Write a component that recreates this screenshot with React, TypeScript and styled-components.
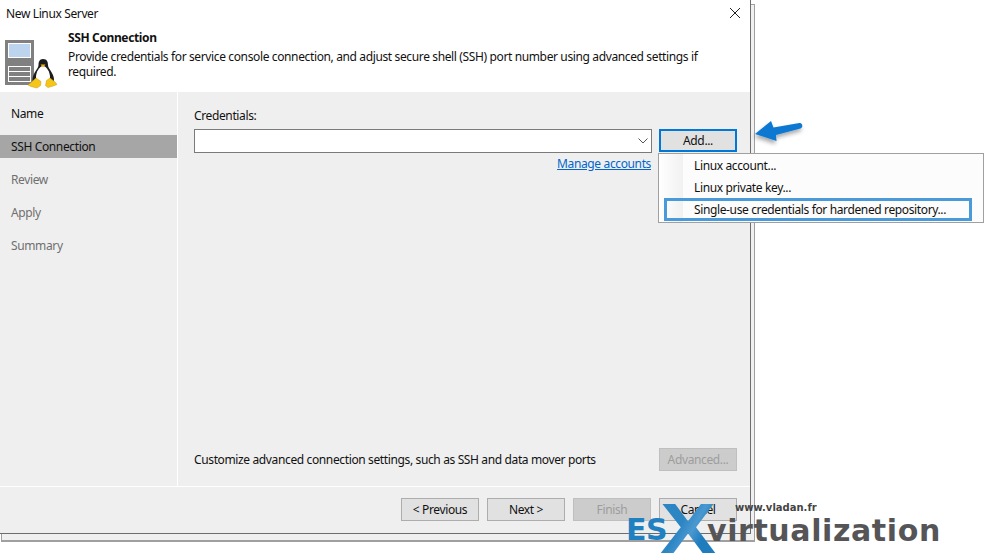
import styled, { createGlobalStyle } from "styled-components";

const GlobalStyle = createGlobalStyle`
  html, body {
    margin: 0;
    padding: 0;
    background: #fff;
  }
  body {
    font-family: "Noto Sans", "Open Sans", "Liberation Sans", sans-serif;
    font-size: 12px;
    letter-spacing: -0.37px;
    color: #111;
  }
`;

const Desktop = styled.div`
  position: relative;
  width: 996px;
  height: 560px;
  overflow: hidden;
  background: #fff;
`;

const BackWindow = styled.div`
  position: absolute;
  left: 1px;
  top: 4px;
  width: 752px;
  height: 535px;
  border: 1px solid #a0a0a0;
  border-bottom-width: 2px;
  background: #f0f0f0;
`;

const Dialog = styled.div`
  position: absolute;
  left: 0;
  top: 0;
  width: 750px;
  height: 533px;
  border-right: 1px solid #6d6d6d;
  border-bottom: 1px solid #6d6d6d;
  display: flex;
  flex-direction: column;
  background: #fff;
`;

const TitleBar = styled.div`
  height: 26px;
  padding-left: 6px;
  display: flex;
  align-items: center;
  justify-content: space-between;
`;

const CloseIcon = styled.svg`
  width: 12px;
  height: 12px;
  margin-right: 9px;
`;

const Header = styled.div`
  height: 66px;
  display: flex;
`;

const HeaderIcon = styled.svg`
  width: 54px;
  height: 50px;
  margin: 13px 0 0 4px;
  flex: none;
`;

const HeaderText = styled.div`
  margin-left: 10px;
  width: 636px;
  padding-top: 4px;
  line-height: 15.5px;
`;

const HeaderTitle = styled.div`
  font-weight: 700;
  margin-bottom: 3px;
`;

const Body = styled.div`
  flex: 1;
  display: flex;
  background: #efefef;
`;

const Nav = styled.nav`
  width: 177px;
  border-right: 1px solid #fff;
  padding-top: 10px;
  display: flex;
  flex-direction: column;
  gap: 10px;
`;

const NavItem = styled.div<{ $active?: boolean; $muted?: boolean }>`
  height: 23px;
  padding-left: 11px;
  display: flex;
  align-items: center;
  background: ${(p) => (p.$active ? "#a6a6a6" : "transparent")};
  color: ${(p) => (p.$muted ? "#6f6f6f" : "#111")};
`;

const Content = styled.div`
  flex: 1;
  padding: 15px 13px 15px 16px;
  display: flex;
  flex-direction: column;
`;

const FieldLabel = styled.div`
  height: 18px;
  line-height: 18px;
  margin-bottom: 4px;
`;

const CredentialRow = styled.div`
  display: flex;
  gap: 7px;
`;

const Combo = styled.div`
  flex: 1;
  height: 24px;
  box-sizing: border-box;
  border: 1px solid #7a7a7a;
  background: #fff;
  display: flex;
  align-items: center;
  justify-content: flex-end;
  padding-right: 3px;
`;

const ComboChevron = styled.svg`
  width: 10px;
  height: 6px;
`;

const Button = styled.button<{ $focused?: boolean; $disabled?: boolean }>`
  width: 78px;
  height: 23px;
  padding: 0;
  box-sizing: border-box;
  font: inherit;
  letter-spacing: inherit;
  color: ${(p) => (p.$disabled ? "#9d9d9d" : "#111")};
  background: ${(p) => (p.$disabled ? "#cccccc" : "#e1e1e1")};
  border: ${(p) =>
    p.$focused
      ? "2px solid #0078d7"
      : p.$disabled
        ? "1px solid #bfbfbf"
        : "1px solid #adadad"};
`;

const LinkRow = styled.div`
  margin: 2px 86px 0 0;
  height: 18px;
  line-height: 18px;
  text-align: right;
`;

const ManageLink = styled.a`
  color: #0066cc;
  text-decoration: underline;
`;

const AdvancedRow = styled.div`
  margin-top: auto;
  display: flex;
  align-items: center;
  justify-content: space-between;
`;

const Footer = styled.div`
  height: 47px;
  border-top: 1px solid #fff;
  background: #efefef;
  box-sizing: border-box;
  padding: 11px 13px 0 0;
  display: flex;
  justify-content: flex-end;
  gap: 8px;
`;

const Menu = styled.div`
  position: absolute;
  left: 658px;
  top: 153px;
  width: 324px;
  height: 67px;
  border: 1px solid #a0a0a0;
  background: linear-gradient(
    to right,
    #ffffff 0,
    #f1f1f1 24px,
    #fcfcfc 24px
  );
  display: flex;
  flex-direction: column;
  padding-top: 1px;
`;

const MenuItem = styled.div`
  height: 22px;
  line-height: 22px;
  padding-left: 35px;
  position: relative;
`;

const MenuMark = styled.span`
  position: absolute;
  left: 5px;
  top: -1px;
  width: 302px;
  height: 17px;
  border: 3px solid #4a9ad9;
`;

const Arrow = styled.svg`
  position: absolute;
  left: 750px;
  top: 115px;
  width: 60px;
  height: 36px;
`;

const Logo = styled.div`
  position: absolute;
  left: 625px;
  top: 496px;
  width: 330px;
  height: 64px;
  letter-spacing: 0;
`;

const LogoEs = styled.span`
  position: absolute;
  left: 1px;
  top: 16px;
  font-family: "DejaVu Sans", sans-serif;
  font-weight: 700;
  font-size: 30px;
  line-height: 36px;
  letter-spacing: -0.5px;
  color: #2180c0;
`;

const LogoX = styled.span`
  position: absolute;
  left: 35px;
  top: -2px;
  font-family: "Liberation Sans", sans-serif;
  font-weight: 700;
  font-size: 70px;
  line-height: 70px;
  transform: scaleX(1.2);
  transform-origin: left center;
  background: linear-gradient(115deg, #2c86c4 40%, #4a98d0 55%, #1f7dbd 70%);
  -webkit-background-clip: text;
  background-clip: text;
  color: transparent;
`;

const LogoWord = styled.span`
  position: absolute;
  left: 82px;
  top: 17px;
  font-family: "DejaVu Sans", sans-serif;
  font-weight: 700;
  font-size: 30px;
  line-height: 36px;
  letter-spacing: 0.6px;
  color: #555558;
`;

const LogoUrl = styled.span`
  position: absolute;
  left: 110px;
  top: 5px;
  font-family: "DejaVu Sans", sans-serif;
  font-weight: 700;
  font-size: 10px;
  line-height: 14px;
  color: #444;
`;

function ServerPenguinIcon() {
  return (
    <HeaderIcon viewBox="0 0 54 50">
      <rect x="1" y="1" width="29" height="45" fill="#808080" />
      <rect x="4.5" y="4.5" width="22" height="14" fill="#bcd4ee" stroke="#fff" />
      <rect x="4.5" y="27.5" width="22" height="15" fill="#808080" stroke="#fff" />
      <path d="M4 32.5h23M4 37.5h23" stroke="#fff" />
      <path
        d="M39 20c-3.500 0-4.500 3-4.500 6 0 2.500-2.500 5-4.500 9-1.500 3-2 6-1 8l20.500 0c1-2 .5-5-1-8-2-4-4.500-6.500-4.500-9 0-3-1-6-5-6z"
        fill="#1c1c1c"
      />
      <path
        d="M39 27c-3.500 0-7 6-7 11 0 5 3 8 7 8s7-3 7-8c0-5-3.500-11-7-11z"
        fill="#fff"
      />
      <path d="M36.500 25.500h5l-2.500 3z" fill="#f2b90f" />
      <path d="M32 39l-5 4.500-3 2.500 3 1.500 6 1.500 3.500-2.500.5-4z" fill="#f5c518" stroke="#c79a10" strokeWidth=".5" />
      <path d="M46 39l5 4 2 2.500-4 1.500-5 1.500-2.500-2 1-5z" fill="#f5c518" stroke="#c79a10" strokeWidth=".5" />
    </HeaderIcon>
  );
}

export default function App() {
  return (
    <Desktop>
      <GlobalStyle />
      <BackWindow />
      <Dialog>
        <TitleBar>
          <span>New Linux Server</span>
          <CloseIcon viewBox="0 0 12 12">
            <path d="M1 1l10 10M11 1L1 11" stroke="#222" fill="none" />
          </CloseIcon>
        </TitleBar>
        <Header>
          <ServerPenguinIcon />
          <HeaderText>
            <HeaderTitle>SSH Connection</HeaderTitle>
            <div>
              Provide credentials for service console connection, and adjust
              secure shell (SSH) port number using advanced settings if
              required.
            </div>
          </HeaderText>
        </Header>
        <Body>
          <Nav>
            <NavItem>Name</NavItem>
            <NavItem $active>SSH Connection</NavItem>
            <NavItem $muted>Review</NavItem>
            <NavItem $muted>Apply</NavItem>
            <NavItem $muted>Summary</NavItem>
          </Nav>
          <Content>
            <FieldLabel>Credentials:</FieldLabel>
            <CredentialRow>
              <Combo>
                <ComboChevron viewBox="0 0 10 6">
                  <path d="M.5.5L5 5 9.500.5" stroke="#555" fill="none" />
                </ComboChevron>
              </Combo>
              <Button $focused>Add...</Button>
            </CredentialRow>
            <LinkRow>
              <ManageLink href="#">Manage accounts</ManageLink>
            </LinkRow>
            <AdvancedRow>
              <span>Customize advanced connection settings, such as SSH and data mover ports</span>
              <Button $disabled>Advanced...</Button>
            </AdvancedRow>
          </Content>
        </Body>
        <Footer>
          <Button>&lt; Previous</Button>
          <Button>Next &gt;</Button>
          <Button $disabled>Finish</Button>
          <Button>Cancel</Button>
        </Footer>
      </Dialog>
      <Menu>
        <MenuItem>Linux account...</MenuItem>
        <MenuItem>Linux private key...</MenuItem>
        <MenuItem>
          <MenuMark />
          Single-use credentials for hardened repository...
        </MenuItem>
      </Menu>
      <Arrow viewBox="0 0 60 36">
        <defs>
          <filter id="arrowShadow" x="-20%" y="-20%" width="140%" height="160%">
            <feDropShadow dx="-1" dy="3" stdDeviation="2" floodColor="#000" floodOpacity="0.35" />
          </filter>
        </defs>
        <path
          d="M5 19L21 6l2.500 6.500 26-4.500c3-.5 4 4.500 1 5.500L26 20l.5 6z"
          fill="#0a78d2"
          filter="url(#arrowShadow)"
        />
      </Arrow>
      <Logo>
        <LogoEs>ES</LogoEs>
        <LogoWord>virtualization</LogoWord>
        <LogoUrl>www.vladan.fr</LogoUrl>
        <LogoX>X</LogoX>
      </Logo>
    </Desktop>
  );
}
